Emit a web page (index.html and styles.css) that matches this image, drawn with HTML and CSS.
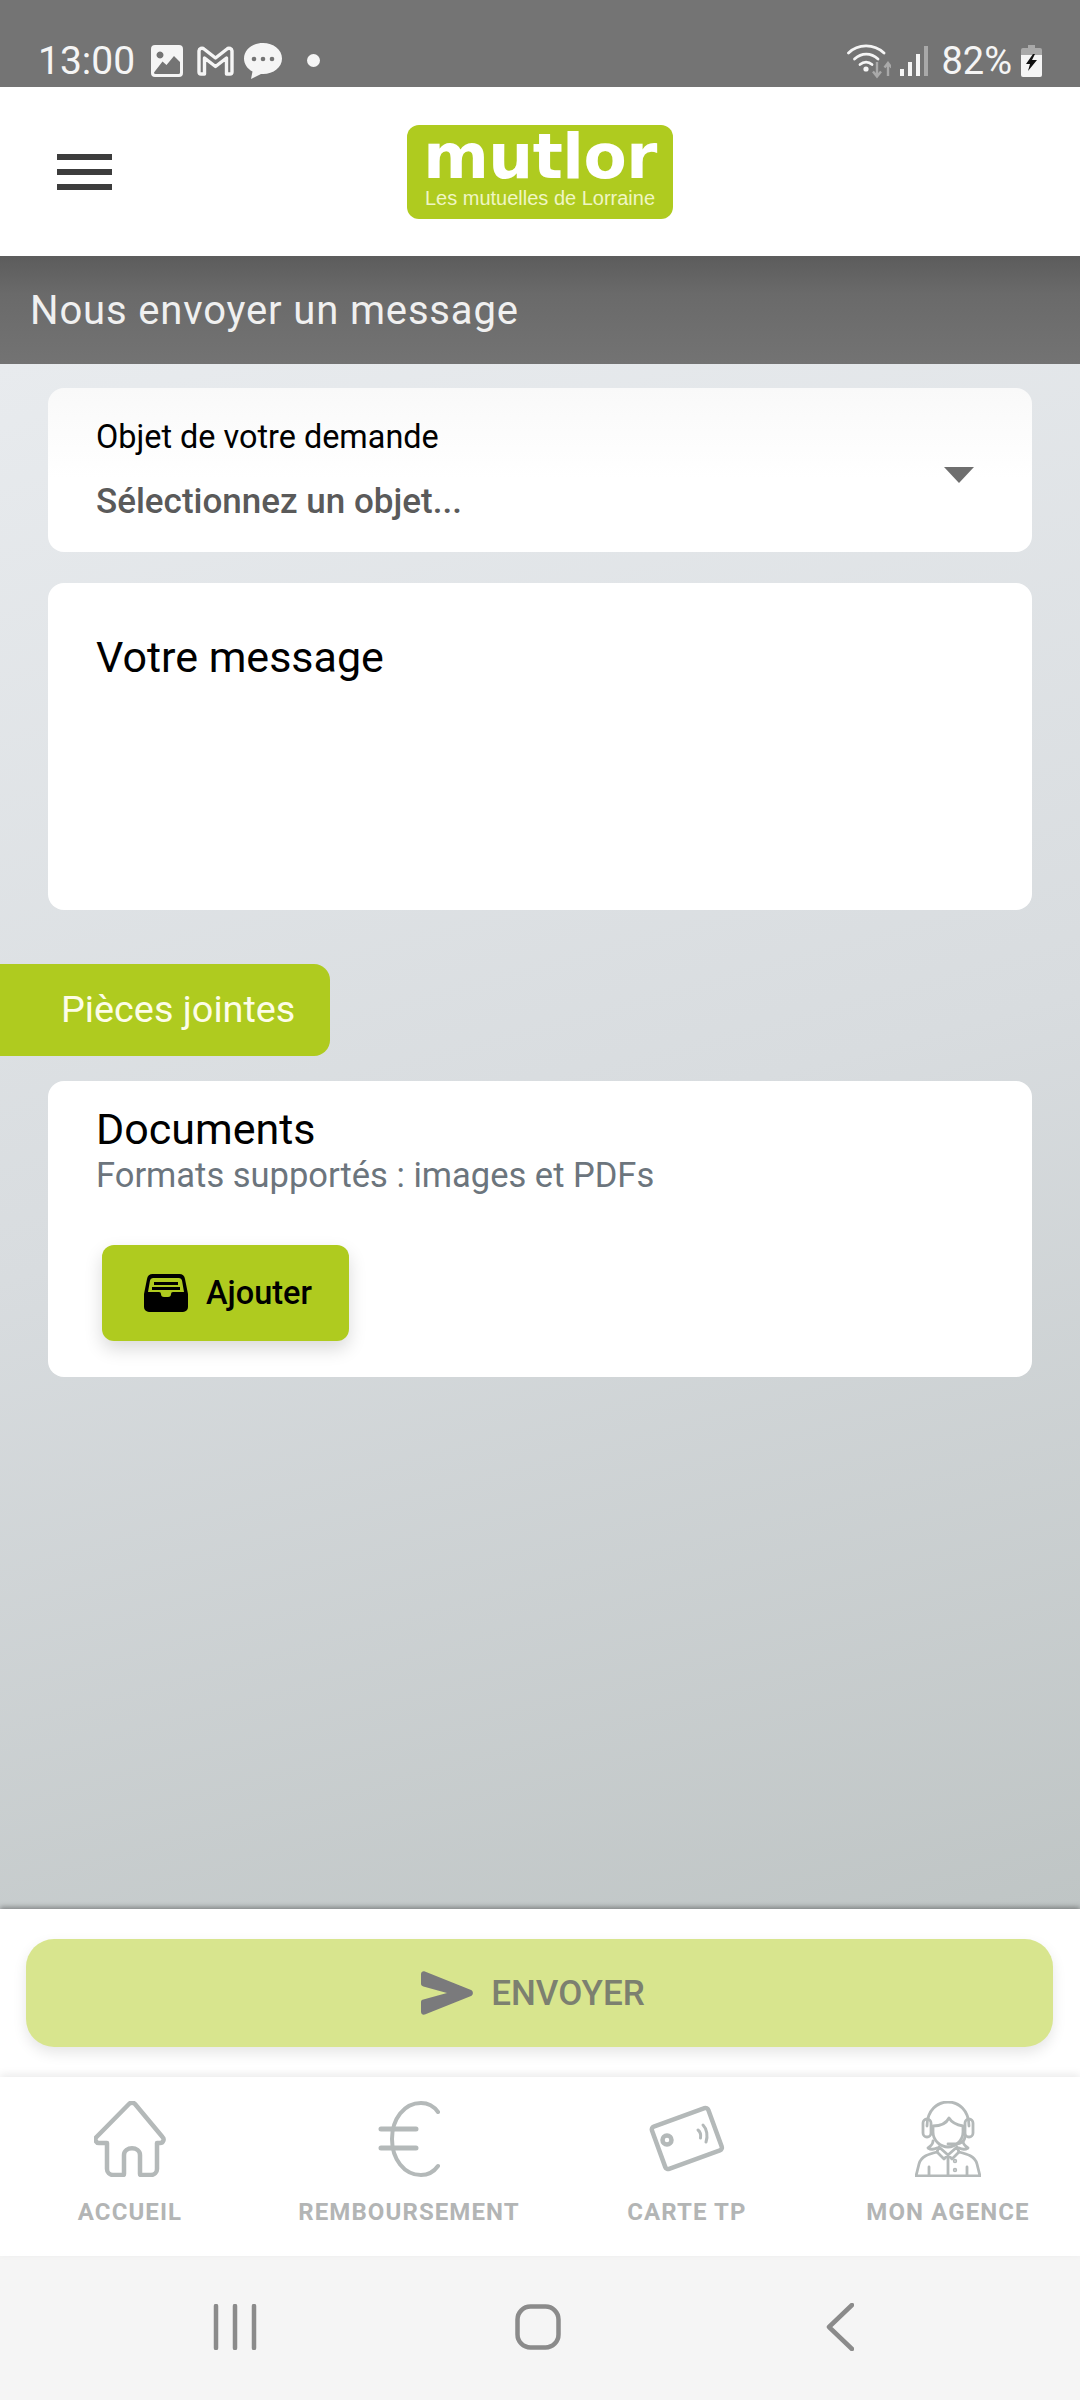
FILE: index.html
```html
<!DOCTYPE html>
<html lang="fr">
<head>
    <meta charset="UTF-8">
    <meta name="viewport" content="width=device-width, initial-scale=1.0">
    <title>Nous envoyer un message</title>
    <link rel="stylesheet" href="styles.css">
</head>
<body>
    <div class="status-bar">
        <span class="status-time">13:00</span>
        <svg class="st-image" width="32" height="32" viewBox="0 0 32 32">
            <path fill="#f5f5f5" fill-rule="evenodd" d="M4 0h24a4 4 0 0 1 4 4v24a4 4 0 0 1-4 4H4a4 4 0 0 1-4-4V4a4 4 0 0 1 4-4zM9 6.500a3.500 3.500 0 1 0 .01 0zM3 27.500a1.500 1.500 0 0 0 1.500 1.500h23a1.500 1.500 0 0 0 1.500-1.500V17l-6-6-7.500 9-4-3.500z"/>
        </svg>
        <svg class="st-gmail" width="37" height="30" viewBox="0 0 37 30">
            <path fill="none" stroke="#f5f5f5" stroke-width="3.400" stroke-linejoin="round" d="M2 5v21a2 2 0 0 0 2 2h3.500V12l11 8.500 11-8.500v16H33a2 2 0 0 0 2-2V5a3 3 0 0 0-5-2L18.500 12 7 3a3 3 0 0 0-5 2z"/>
        </svg>
        <svg class="st-chat" width="38" height="36" viewBox="0 0 38 36">
            <path fill="#f5f5f5" d="M19 0c10.500 0 19 6.700 19 15.500S29.500 31 19 31c-.7 0-1.400 0-2-.1L7 36l1.500-7.500C3.300 25.800 0 21 0 15.500 0 6.700 8.500 0 19 0z"/>
            <circle cx="10" cy="16" r="2.300" fill="#747474"/>
            <circle cx="19" cy="16" r="2.300" fill="#747474"/>
            <circle cx="28" cy="16" r="2.300" fill="#747474"/>
        </svg>
        <span class="status-dot"></span>
        <span class="status-spacer"></span>
        <svg class="st-wifi" width="44" height="36" viewBox="0 0 44 36">
            <g fill="none" stroke="#f5f5f5" stroke-width="2.800" stroke-linecap="round">
                <path d="M1.500 10C11 .5 27 .5 37 10"/>
                <path d="M7.500 16c7-6.500 16.500-6.500 23.500 0"/>
                <path d="M13 21.500c3.700-3 8.500-3 12 0"/>
            </g>
            <circle cx="19" cy="26" r="2.600" fill="#f5f5f5"/>
            <g fill="none" stroke="#a9a9a9" stroke-width="2.400">
                <path d="M30 19v14M26 28.500l4 5 4-5"/>
                <path d="M41 33V20M37.500 24.500l3.500-4.500 3.500 4.500"/>
            </g>
        </svg>
        <div class="st-signal">
            <span class="bar bar-1"></span>
            <span class="bar bar-2"></span>
            <span class="bar bar-3"></span>
            <span class="bar bar-4"></span>
        </div>
        <span class="status-battery-text">82%</span>
        <svg class="st-battery" width="21" height="32" viewBox="0 0 21 32">
            <path fill="#a9a9a9" d="M7 0h7v3h5a2 2 0 0 1 2 2v8H0V5a2 2 0 0 1 2-2h5z"/>
            <path fill="#f5f5f5" d="M0 10h21v20a2 2 0 0 1-2 2H2a2 2 0 0 1-2-2z"/>
            <path fill="#111" d="M12 9l-7 10h4l-2 7 9-11h-5l3-6z"/>
        </svg>
    </div>

    <header class="app-header">
        <div class="burger">
            <span></span>
            <span></span>
            <span></span>
        </div>
        <div class="logo">
            <span class="logo-name">mutlor</span>
            <span class="logo-tag">Les mutuelles de Lorraine</span>
        </div>
    </header>

    <div class="page-title">Nous envoyer un message</div>

    <main class="content">
        <div class="card card-select">
            <div class="select-text">
                <div class="select-label">Objet de votre demande</div>
                <div class="select-value">Sélectionnez un objet...</div>
            </div>
            <span class="select-arrow"></span>
        </div>

        <div class="card card-message">Votre message</div>

        <div class="section-pill">Pièces jointes</div>

        <div class="card card-docs">
            <div class="docs-title">Documents</div>
            <div class="docs-sub">Formats supportés : images et PDFs</div>
            <button class="add-btn">
                <svg width="44" height="38" viewBox="0 0 44 38">
                    <path d="M9 0h26a6 6 0 0 1 6 5l3 15v13a5 5 0 0 1-5 5H5a5 5 0 0 1-5-5V20L3 5a6 6 0 0 1 6-5zM9 4a3 3 0 0 0-3 2.500L4 18h11a2 2 0 0 1 2 2 3 3 0 0 0 3 3h4a3 3 0 0 0 3-3 2 2 0 0 1 2-2h11L38 6.500A3 3 0 0 0 35 4zM10 8h24v3H10zM8 13h28v3H8z" fill="#000" fill-rule="evenodd"/>
                </svg>
                <span>Ajouter</span>
            </button>
        </div>
    </main>

    <div class="send-bar">
        <button class="send-btn">
            <svg width="52" height="46" viewBox="0 0 54 46">
                <path fill="#7a7a7c" d="M0 3.500C0 1 2 0 4 .6L52 20c2.500 1 2.500 5 0 6L4 45.400C2 46 0 45 0 42.500V32.500c0-1.500 1-2.500 2.500-2.700L27 23 2.500 16.200C1 16 0 15 0 13.500z"/>
            </svg>
            <span>ENVOYER</span>
        </button>
    </div>

    <nav class="tab-bar">
        <a class="tab">
            <svg class="tab-home" width="76" height="76" viewBox="0 0 76 76" fill="none" stroke="#b4b9b9" stroke-width="4.500" stroke-linejoin="round" stroke-linecap="round">
                <path d="M13 42v26a6 6 0 0 0 6 6h10a1 1 0 0 0 1-1V54c0-9 16-9 16 0v19a1 1 0 0 0 1 1h10a6 6 0 0 0 6-6V42h3a3.500 3.500 0 0 0 2.500-6L41 3a4 4 0 0 0-6 0L2.500 36A3.500 3.500 0 0 0 5 42z"/>
            </svg>
            <span>ACCUEIL</span>
        </a>
        <a class="tab">
            <svg width="62" height="76" viewBox="0 0 62 76" fill="none" stroke="#b4b9b9" stroke-linecap="round">
                <path stroke-width="4" d="M60 11C55 4 49 2 43 2 26 2 14 18 14 38s12 36 29 36c6 0 12-2 17-9"/>
                <path stroke-width="5" d="M3 28h35M3 47h35"/>
            </svg>
            <span>REMBOURSEMENT</span>
        </a>
        <a class="tab">
            <svg width="76" height="76" viewBox="0 0 76 76" fill="none" stroke="#b4b9b9" stroke-width="4.500" stroke-linejoin="round">
                <rect x="8" y="15" width="60" height="45" rx="3" transform="rotate(-20 38 38)"/>
                <circle cx="18" cy="39" r="4.500"/>
                <path stroke-width="3" stroke-linecap="round" d="M49 29c2.500 2 3 5 2.500 8M54 24c4 4 5 11 3 17"/>
            </svg>
            <span>CARTE TP</span>
        </a>
        <a class="tab">
            <svg width="66" height="76" viewBox="0 0 66 76" fill="none" stroke="#b4b9b9" stroke-width="2.800" stroke-linejoin="round" stroke-linecap="round">
                <path d="M12 25C12-7 54-7 54 25"/>
                <rect x="8" y="18" width="8" height="18" rx="4"/>
                <rect x="50" y="18" width="8" height="18" rx="4"/>
                <path d="M18 25c6 0 13-2 16-8 3 5 8 7 14 8v6c0 9-8 15-15 15s-15-6-15-15z"/>
                <path d="M50 35c0 5-4 8-9 8h-8"/>
                <path d="M18 40c0 3-2 5-5 7 3 2 7 1 9 0M48 40c0 3 2 5 5 7-3 2-7 1-9 0"/>
                <path d="M24 46l9 8 9-8M24 46l-2 5 7 7 4-4 4 4 7-7-2-5"/>
                <path d="M22 51c-8 2-16 4-18 12l-3 12h64l-3-12c-2-8-10-10-18-12"/>
                <path d="M33 56v19M14 75v-9M52 75v-9"/>
                <circle cx="40" cy="60" r=".8"/>
                <circle cx="40" cy="69" r=".8"/>
            </svg>
            <span>MON AGENCE</span>
        </a>
    </nav>

    <div class="system-nav">
        <svg class="sys-recents" width="44" height="46" viewBox="0 0 44 46" stroke="#8b8b8b" stroke-width="4.500" stroke-linecap="round">
            <path d="M3 2v42M22 2v42M41 2v42"/>
        </svg>
        <svg class="sys-home" width="46" height="46" viewBox="0 0 46 46" fill="none" stroke="#8b8b8b" stroke-width="4.500">
            <rect x="2.500" y="2.500" width="41" height="41" rx="13"/>
        </svg>
        <svg class="sys-back" width="28" height="48" viewBox="0 0 28 48" fill="none" stroke="#8b8b8b" stroke-width="4.500" stroke-linecap="round" stroke-linejoin="round">
            <path d="M26 2L3 24l23 22"/>
        </svg>
    </div>
</body>
</html>
```

FILE: styles.css
```css
/* General Styling */
* {
    box-sizing: border-box;
}

body {
    margin: 0;
    width: 1080px;
    height: 2400px;
    display: flex;
    flex-direction: column;
    font-family: 'Roboto', 'Liberation Sans', sans-serif;
    background: #fff;
    overflow: hidden;
}

/* Status Bar */
.status-bar {
    height: 87px;
    flex-shrink: 0;
    background: #747474;
    color: #f5f5f5;
    display: flex;
    align-items: center;
    padding: 34px 38px 0 38px;
}

.status-time {
    font-size: 39px;
    width: 113px;
}

.st-gmail {
    margin-left: 14px;
}

.st-chat {
    margin-left: 10px;
}

.status-dot {
    width: 13px;
    height: 13px;
    border-radius: 50%;
    background: #f5f5f5;
    margin-left: 25px;
}

.status-spacer {
    flex: 1;
}

.st-signal {
    display: flex;
    align-items: flex-end;
    gap: 4px;
    height: 30px;
    margin-left: 9px;
}

.bar {
    width: 4px;
    background: #f5f5f5;
}

.bar-1 {
    height: 7px;
}

.bar-2 {
    height: 14px;
}

.bar-3 {
    height: 22px;
}

.bar-4 {
    height: 30px;
    background: #a9a9a9;
}

.status-battery-text {
    font-size: 38px;
    margin-left: 13px;
}

.st-battery {
    margin-left: 9px;
}

/* Header */
.app-header {
    height: 169px;
    flex-shrink: 0;
    background: #fff;
    display: grid;
    grid-template-columns: 1fr auto 1fr;
    align-items: center;
    padding-left: 57px;
    padding-right: 57px;
}

.burger {
    display: flex;
    flex-direction: column;
    gap: 9px;
    width: 55px;
}

.burger span {
    height: 6px;
    background: #3c3c3c;
}

.logo {
    width: 266px;
    height: 94px;
    border-radius: 12px;
    background: #afcb1f;
    display: flex;
    flex-direction: column;
    align-items: center;
    padding-top: 2px;
}

.logo-name {
    font-family: 'DejaVu Sans', sans-serif;
    font-weight: bold;
    font-size: 63px;
    line-height: 60px;
    color: #fff;
    letter-spacing: -0.5px;
}

.logo-tag {
    font-family: 'Liberation Sans', sans-serif;
    font-size: 20px;
    line-height: 22px;
    color: #f0f6c4;
}

/* Page title */
.page-title {
    height: 108px;
    flex-shrink: 0;
    background: linear-gradient(180deg, #5c5c5c, #6a6a6a 35%, #737373);
    color: #f0f0f0;
    font-size: 40px;
    letter-spacing: 0.85px;
    display: flex;
    align-items: center;
    padding-left: 30px;
}

/* Main content */
.content {
    flex: 1;
    background: linear-gradient(165deg, #e8ebee, #d8dcdf 50%, #bfc5c5);
    padding: 24px 48px 0 48px;
    display: flex;
    flex-direction: column;
}

.card {
    background: #fff;
    border-radius: 16px;
}

.card-select {
    height: 164px;
    background: linear-gradient(180deg, #f9f9f9, #fff 55%);
    display: flex;
    align-items: center;
    justify-content: space-between;
    padding: 0 58px 0 48px;
}

.select-label {
    font-size: 32.400px;
    line-height: 38px;
    color: #000;
    margin-bottom: 26px;
}

.select-value {
    font-size: 35px;
    line-height: 40px;
    font-weight: 500;
    color: #5a5a5a;
}

.select-arrow {
    width: 0;
    height: 0;
    border-left: 15px solid transparent;
    border-right: 15px solid transparent;
    border-top: 16px solid #6e6e6e;
    margin-top: 10px;
}

.card-message {
    height: 327px;
    margin-top: 31px;
    padding: 47px 48px 0;
    font-size: 43px;
    line-height: 54px;
    color: #000;
}

.section-pill {
    align-self: flex-start;
    width: 330px;
    height: 92px;
    margin: 54px 0 25px -48px;
    padding: 0 0 2px 61px;
    background: #afcb1f;
    border-radius: 0 16px 16px 0;
    color: #fdfde8;
    font-size: 37.800px;
    display: flex;
    align-items: center;
}

.card-docs {
    height: 296px;
    padding: 24px 48px 0;
}

.docs-title {
    font-size: 43px;
    line-height: 48px;
    color: #000;
}

.docs-sub {
    font-size: 34.500px;
    line-height: 42px;
    color: #6c757d;
    margin-top: 1px;
}

.add-btn {
    margin: 49px 0 0 6px;
    width: 247px;
    height: 96px;
    border: none;
    border-radius: 12px;
    background: #afcb1f;
    box-shadow: 0 8px 18px rgba(0, 0, 0, 0.15);
    display: flex;
    align-items: center;
    gap: 18px;
    padding: 0 0 0 42px;
    font-family: inherit;
    font-size: 32.500px;
    font-weight: 500;
    color: #000;
}

/* Send bar */
.send-bar {
    height: 168px;
    flex-shrink: 0;
    background: #fff;
    box-shadow: 0 -2px 5px rgba(0, 0, 0, 0.35);
    padding: 30px 27px 0 26px;
    position: relative;
}

.send-btn {
    width: 100%;
    height: 108px;
    border: none;
    border-radius: 28px;
    background: #d8e58e;
    box-shadow: 0 6px 14px rgba(0, 0, 0, 0.1);
    display: flex;
    align-items: center;
    justify-content: center;
    gap: 18px;
    padding: 0 13px 0 0;
    font-family: inherit;
    font-size: 35px;
    font-weight: 500;
    color: #7c8070;
}

/* Bottom tabs */
.tab-bar {
    height: 179px;
    flex-shrink: 0;
    background: #fff;
    box-shadow: 0 -3px 8px rgba(0, 0, 0, 0.08);
    display: grid;
    grid-template-columns: 260px 298px 258px 264px;
    padding-top: 24px;
    position: relative;
}

.tab {
    display: flex;
    flex-direction: column;
    align-items: center;
    gap: 22px;
    font-size: 24px;
    line-height: 27px;
    font-weight: bold;
    letter-spacing: 1.100px;
    color: #b3b5b5;
}

.tab-home {
    margin-left: 4px;
}

/* System navigation */
.system-nav {
    height: 144px;
    flex-shrink: 0;
    background: #f5f5f5;
    display: flex;
    align-items: center;
    padding: 0 0 3px 213px;
}

.sys-home {
    margin-left: 258px;
}

.sys-back {
    margin-left: 265px;
}
```
